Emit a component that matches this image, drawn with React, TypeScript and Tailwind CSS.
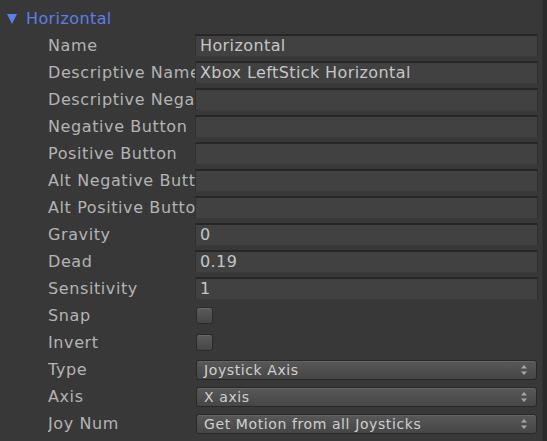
const font = "font-['DejaVu_Sans','Liberation_Sans',sans-serif]";

type Field =
    | { label: string, kind: "text", value: string }
    | { label: string, kind: "check" }
    | { label: string, kind: "select", value: string };

const fields: Field[] = [
    { label: "Name", kind: "text", value: "Horizontal" },
    { label: "Descriptive Name", kind: "text", value: "Xbox LeftStick Horizontal" },
    { label: "Descriptive Negative Name", kind: "text", value: "" },
    { label: "Negative Button", kind: "text", value: "" },
    { label: "Positive Button", kind: "text", value: "" },
    { label: "Alt Negative Button", kind: "text", value: "" },
    { label: "Alt Positive Button", kind: "text", value: "" },
    { label: "Gravity", kind: "text", value: "0" },
    { label: "Dead", kind: "text", value: "0.19" },
    { label: "Sensitivity", kind: "text", value: "1" },
    { label: "Snap", kind: "check" },
    { label: "Invert", kind: "check" },
    { label: "Type", kind: "select", value: "Joystick Axis" },
    { label: "Axis", kind: "select", value: "X axis" },
    { label: "Joy Num", kind: "select", value: "Get Motion from all Joysticks" },
];

const SelectArrows = () => (
    <svg width="6" height="10" viewBox="0 0 6 10" className="shrink-0">
        <path d="M3 0 L6 3.5 L0 3.5 Z" fill="#a8a8a8" />
        <path d="M0 6.5 L6 6.5 L3 10 Z" fill="#a8a8a8" />
    </svg>
);

const Control = ({ field }: { field: Field }) => {
    if (field.kind === "check") {
        return (
            <div className="w-[17px] h-[17px] ml-[1px] rounded-[3px] border border-[#2b2b2b] bg-gradient-to-b from-[#5b5b5b] to-[#464646] shadow-[inset_0_1px_0_#666666]" />
        );
    }
    if (field.kind === "select") {
        return (
            <div className="h-[20px] mx-[1px] rounded-[3px] border border-[#282828] bg-gradient-to-b from-[#585858] to-[#464646] shadow-[inset_0_1px_0_#656565] pl-[7px] pr-[9px] flex items-center justify-between">
                <span className="text-[14px] leading-none tracking-[0.6px] text-[#d0d0d0] whitespace-nowrap">{field.value}</span>
                <SelectArrows />
            </div>
        );
    }
    return (
        <div className="h-[23px] bg-[#414141] border border-[#2f2f2f] border-t-2 border-t-[#262626] border-b-[#3a3a3a] px-[4px] flex items-center">
            <span className="text-[16px] leading-none tracking-[0.4px] text-[#c6c6c6] whitespace-nowrap">{field.value}</span>
        </div>
    );
};

export default function App() {
    return (
        <div className={`w-[547px] h-[441px] bg-[#383838] flex overflow-hidden ${font}`}>
            <div className="flex-1 pt-[5px]">
                <div className="h-[27px] flex items-center pl-[7px] gap-[9px]">
                    <svg width="10" height="10" viewBox="0 0 10 10">
                        <path d="M0 0 L10 0 L5 10 Z" fill="#5b80e6" />
                    </svg>
                    <span className="text-[16px] leading-none tracking-[0.4px] text-[#5b7fe8]">Horizontal</span>
                </div>
                {fields.map((f) => (
                    <div key={f.label} className="h-[27px] flex items-center">
                        <div className="ml-[48px] w-[147px] shrink-0 overflow-hidden whitespace-nowrap text-[16px] leading-none tracking-[0.6px] text-[#b4b4b4]">
                            {f.label}
                        </div>
                        <div className="flex-1 mr-[4px]">
                            <Control field={f} />
                        </div>
                    </div>
                ))}
            </div>
            <div className="w-[5px] bg-[#2a2a2a] border-l border-[#323232]" />
        </div>
    );
}
